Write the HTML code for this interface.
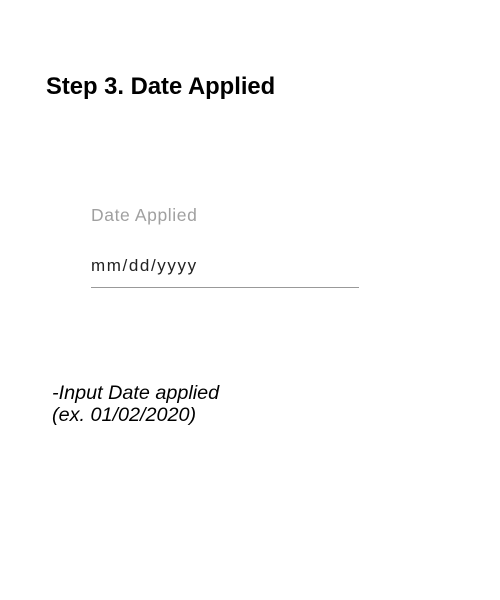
<!DOCTYPE html>
<html><head><style>
body{margin:0;width:500px;height:600px;background:#fff;position:relative;font-family:"Liberation Sans",sans-serif;overflow:hidden}
div{position:absolute;white-space:nowrap}
</style></head><body>
<div style="left:46px;top:73px;font-size:23.8px;font-weight:bold;color:#000">Step 3. Date Applied</div>
<div style="left:91px;top:205px;font-size:17.5px;color:#a0a0a0;letter-spacing:0.6px">Date Applied</div>
<div style="left:91px;top:256px;font-size:17px;color:#222;letter-spacing:1.6px">mm/dd/yyyy</div>
<div style="left:91px;top:287px;width:268px;height:1px;background:#999"></div>
<div style="left:52px;top:382px;font-size:19.8px;font-style:italic;color:#000;line-height:22px">-Input Date applied<br>(ex. 01/02/2020)</div>
</body></html>
